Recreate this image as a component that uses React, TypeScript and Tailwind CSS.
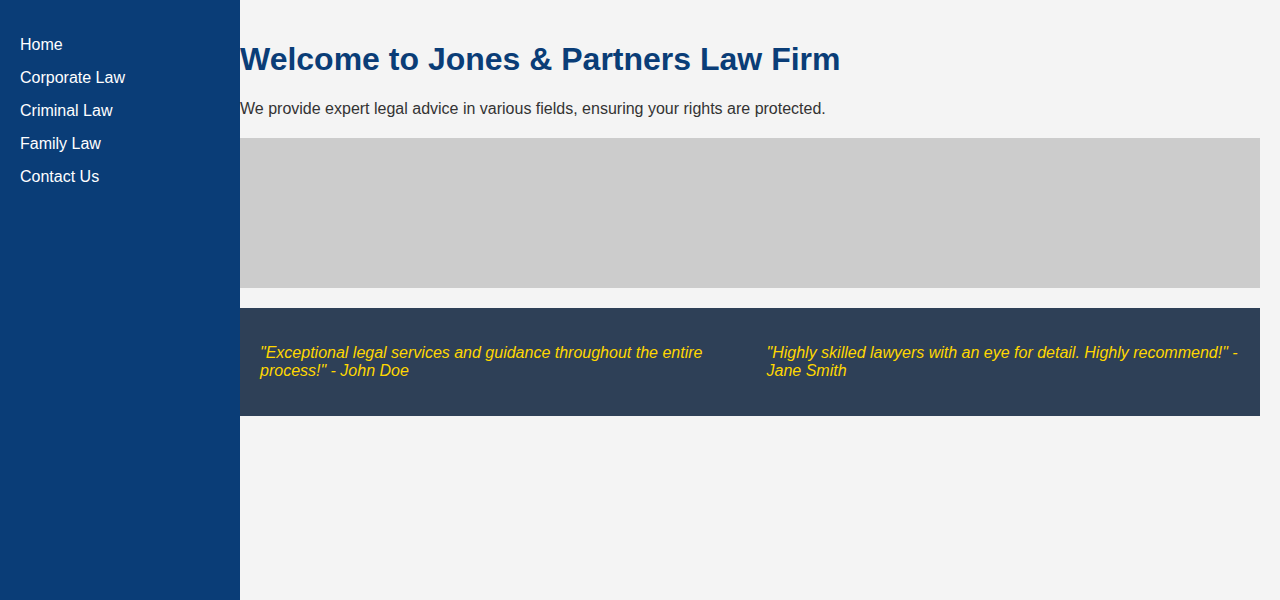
import React from 'react';

const links = ['Home', 'Corporate Law', 'Criminal Law', 'Family Law', 'Contact Us'];

const testimonials = [
  '"Exceptional legal services and guidance throughout the entire process!" - John Doe',
  '"Highly skilled lawyers with an eye for detail. Highly recommend!" - Jane Smith',
];

const Sidebar: React.FC = () => (
  <nav className="w-[240px] shrink-0 bg-[#0a3d77] px-5 pt-[36px]">
    <ul className="flex flex-col gap-[15px]">
      {links.map((link) => (
        <li key={link}>
          <a href="#" className="block text-base leading-[18px] text-white">
            {link}
          </a>
        </li>
      ))}
    </ul>
  </nav>
);

const App: React.FC = () => {
  return (
    <div className="flex min-h-screen bg-[#f4f4f4] font-['Liberation_Sans',Arial,sans-serif]">
      <Sidebar />
      <main className="flex-1 pt-5 pr-5 pb-5">
        <h1 className="my-[21.44px] text-[32px] leading-[normal] font-bold text-[#0a3d77]">
          Welcome to Jones &amp; Partners Law Firm
        </h1>
        <p className="text-base leading-[normal] text-[#333]">
          We provide expert legal advice in various fields, ensuring your rights are protected.
        </p>
        <div className="mt-5 h-[150px] bg-[#cccccc]" />
        <section className="mt-5 grid grid-cols-2 gap-[33px] bg-[#2e4057] p-5">
          {testimonials.map((t) => (
            <p key={t} className="my-4 text-base leading-[normal] text-[#ffd700] italic">
              {t}
            </p>
          ))}
        </section>
      </main>
    </div>
  );
};

export default App;
